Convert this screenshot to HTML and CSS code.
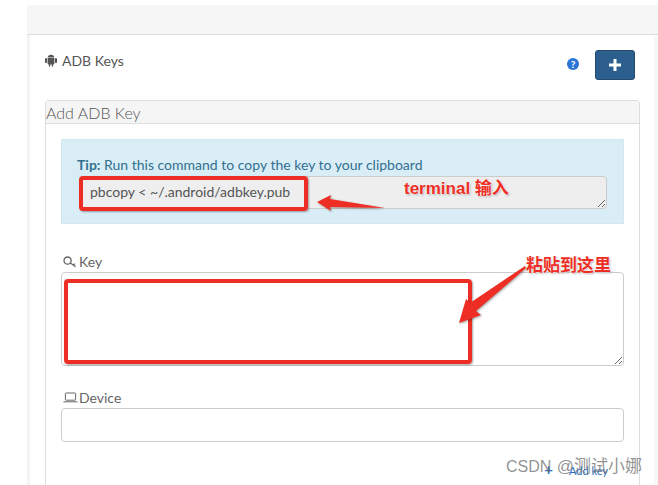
FILE: index.html

```html
<!DOCTYPE html>
<html lang="zh">
<head>
  <meta charset="UTF-8" />
  <title>ADB Keys</title>
  <link rel="stylesheet" href="styles.css">
</head>
<body>
  <div class="topbar"></div>

  <div class="page">
    <div class="heading">
      <h4 class="title">
        <svg class="android" viewBox="0 0 12 13"><path d="M2.6 3.6C2.8 1.9 4.2.8 6 .8s3.2 1.1 3.4 2.8zM2.6 4.1h6.8v5.7c0 .5-.3.8-.8.8h-.5v1.4c0 1-1.3 1-1.3 0v-1.4h-1.6v1.4c0 1-1.3 1-1.3 0v-1.4h-.5c-.5 0-.8-.3-.8-.8zM1 4.1c.6 0 1 .3 1 .9v3.2c0 1-2 1-2 0V5c0-.6.4-.9 1-.9zM11 4.1c.6 0 1 .3 1 .9v3.2c0 1-2 1-2 0V5c0-.6.4-.9 1-.9z"/></svg>
        ADB Keys
      </h4>
      <div class="actions">
        <span class="help">?</span>
        <button class="add-btn">
          <svg viewBox="0 0 12 12"><path d="M4.5 0h3v4.5H12v3H7.5V12h-3V7.5H0v-3h4.5z"/></svg>
        </button>
      </div>
    </div>

    <div class="panel">
      <div class="panel-head">Add ADB Key</div>
      <div class="panel-body">
        <div class="tip">
          <p class="tip-text"><b>Tip:</b> Run this command to copy the key to your clipboard</p>
          <textarea class="command" readonly>pbcopy &lt; ~/.android/adbkey.pub</textarea>
        </div>

        <label class="field-label key-label">
          <svg viewBox="0 0 14 12"><circle cx="4.6" cy="4.6" r="3.6"/><path d="M7.4 7l5.2 3.8M10.4 9.2l1.4-1.6"/></svg>
          Key
        </label>
        <textarea class="key-input"></textarea>

        <label class="field-label device-label">
          <svg viewBox="0 0 15 11"><rect x="2.4" y="1" width="10.2" height="7.2" rx=".8"/><path d="M.5 9.8h14"/></svg>
          Device
        </label>
        <input class="device-input" type="text" />

        <div class="form-foot"><a class="add-link"><span class="add-plus">+</span>Add key</a></div>
      </div>
    </div>
  </div>

  <!-- annotations on top of the screenshot -->
  <div class="mark mark-command"></div>
  <div class="mark mark-key"></div>
  <span class="note note-terminal">terminal 输入</span>
  <span class="note note-paste">粘贴到这里</span>
  <svg class="arrows" viewBox="0 0 658 485">
    <path d="M317 202l14-7-1 4 55 9-55-1 1 4z"/>
    <path d="M459 323l7-24 4 4 55-37 1 2-50 43 5 4z"/>
  </svg>
  <span class="watermark">CSDN <span class="watermark-name">@测试小娜</span></span>
</body>
</html>
```

FILE: styles.css

```css
html, body {
  height: 100%;
}
body {
  margin: 0;
  height: 485px;
  overflow: hidden;
  position: relative;
  background: white;
  font-family: Lato, "Noto Sans CJK SC", sans-serif;
  color: #555;
}
.topbar {
  height: 29px;
  margin: 5px 0 0 27px;
  background: #f6f6f6;
  border-bottom: 1px solid #ddd;
}
.page {
  margin-left: 27px;
  padding: 0 14px 0 15px;
  height: 450px;
  box-sizing: border-box;
  background: white;
  border-left: 3px solid #f4f4f4;
  border-right: 4px solid #f7f7f7;
}
.heading {
  display: flex;
  justify-content: space-between;
  height: 65px;
  padding-right: 1px;
}
.title {
  display: flex;
  align-items: center;
  gap: 5px;
  height: 17px;
  margin: 17px 0 0;
  font-size: 14px;
  font-weight: normal;
  color: #555;
}
.android {
  width: 12px;
  height: 13px;
  fill: #555;
}
.actions {
  display: flex;
  align-items: flex-start;
  gap: 16px;
  padding: 15px 4px 0 0;
}
.help {
  width: 12px;
  height: 12px;
  margin-top: 8px;
  border-radius: 50%;
  background: #2a75d6;
  color: white;
  font-size: 10px;
  font-weight: 900;
  line-height: 12px;
  text-align: center;
}
.add-btn {
  display: flex;
  align-items: center;
  justify-content: center;
  width: 40px;
  height: 30px;
  padding: 0;
  background: #2c5f8e;
  border: 1px solid #24496c;
  border-radius: 3px;
}
.add-btn svg {
  width: 12px;
  height: 12px;
  fill: white;
}
.panel {
  height: 385px;
  width: 595px;
  box-sizing: border-box;
  border: 1px solid #ddd;
  border-bottom: 0;
  border-radius: 4px 4px 0 0;
}
.panel-head {
  height: 22px;
  background: #f5f5f5;
  border-bottom: 1px solid #ddd;
  font-size: 16px;
  font-weight: 300;
  line-height: 24px;
  color: #555;
}
.panel-body {
  padding: 15px 15px 0;
}
.tip {
  height: 85px;
  box-sizing: border-box;
  padding: 17px 16px 0 15px;
  background: #d9edf7;
  border: 1px solid #d3e8f2;
}
.tip-text {
  margin: 0;
  height: 19px;
  font-size: 14px;
  line-height: 16px;
  color: #31708f;
}
.command {
  display: block;
  width: 528px;
  height: 33px;
  margin: 0 0 0 2px;
  padding: 5px 10px;
  box-sizing: border-box;
  background: #eee;
  border: 1px solid #ccc;
  border-radius: 4px;
  font: 14px/20px Lato, sans-serif;
  color: #555;
}
.field-label {
  display: flex;
  align-items: center;
  gap: 2px;
  height: 17px;
  font-size: 14px;
  color: #666;
}
.field-label svg {
  fill: none;
  stroke: #666;
}
.key-label {
  margin: 29px 0 2px 2px;
}
.key-label svg {
  width: 14px;
  height: 12px;
  stroke-width: 1.3;
}
.device-label {
  gap: 1px;
  margin: 23px 0 2px 2px;
}
.device-label svg {
  width: 15px;
  height: 11px;
}
.key-input {
  display: block;
  width: 563px;
  height: 94px;
  margin: 0;
  box-sizing: border-box;
  background: white;
  border: 1px solid #ccc;
  border-radius: 4px;
}
.device-input {
  display: block;
  width: 563px;
  height: 34px;
  box-sizing: border-box;
  background: white;
  border: 1px solid #ccc;
  border-radius: 4px;
}
.form-foot {
  margin-top: 20px;
  padding-right: 16px;
  text-align: right;
  line-height: 14px;
}
.add-link {
  font-size: 11px;
  color: #2a6fc4;
}
.add-plus {
  margin-right: 16px;
  font-size: 15px;
  font-weight: bold;
}

.mark {
  position: absolute;
  box-sizing: border-box;
  border: 4px solid #ee2e24;
  border-radius: 4px;
  box-shadow: 1px 1px 2px rgba(0,0,0,0.35);
}
.mark-command {
  left: 79px;
  top: 176px;
  width: 229px;
  height: 35px;
}
.mark-key {
  left: 64px;
  top: 279px;
  width: 408px;
  height: 85px;
}
.note {
  position: absolute;
  font-family: "Liberation Sans", "Noto Sans CJK SC", sans-serif;
  font-size: 17px;
  font-weight: bold;
  line-height: 18px;
  color: #ee2e24;
  text-shadow: 0 0 2px white, 0 0 2px white, 1px 1px 2px #999;
  white-space: nowrap;
}
.note-terminal {
  left: 404px;
  top: 180px;
}
.note-paste {
  left: 526px;
  top: 257px;
}
.arrows {
  position: absolute;
  left: 0;
  top: 0;
  width: 658px;
  height: 485px;
  fill: #ee2e24;
  filter: drop-shadow(1px 1px 1px rgba(0,0,0,0.35));
}
.watermark {
  position: absolute;
  left: 506px;
  top: 457px;
  font-family: "Liberation Sans", "Noto Sans CJK SC", sans-serif;
  font-size: 16px;
  line-height: 20px;
  color: rgba(110,110,110,0.75);
  white-space: nowrap;
}
.watermark-name {
  margin-left: 1px;
  font-size: 17px;
}
```
